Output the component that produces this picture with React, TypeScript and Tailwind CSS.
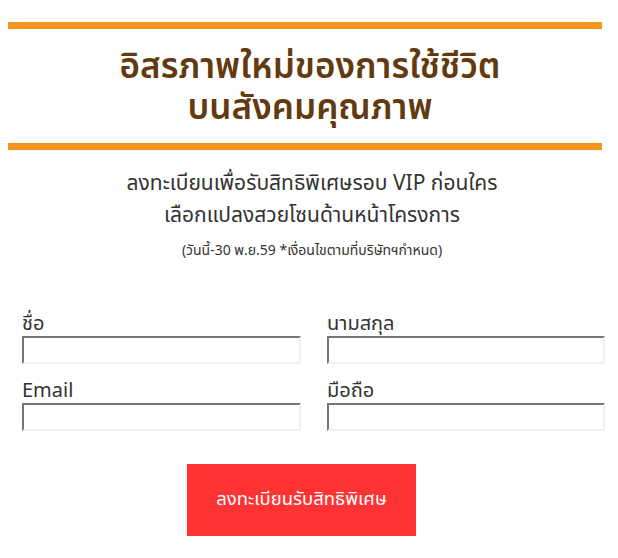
export default function App() {
    const font = { fontFamily: '"Noto Sans Thai", "Noto Sans", "Liberation Sans", sans-serif' };

    return (
        <div className="w-[618px] h-[558px] bg-white overflow-hidden" style={font}>
            <div className="pt-[22px] pl-[8px] w-[602px]">
                <div className="h-[7px] bg-[#f7941d]" />
                <div className="flex flex-col items-center pt-[18px] pb-[14px] text-[#633a10] font-semibold text-[35px] leading-[41px] pl-[10px]">
                    <div>อิสรภาพใหม่ของการใช้ชีวิต</div>
                    <div>บนสังคมคุณภาพ</div>
                </div>
                <div className="h-[7px] bg-[#f7941d]" />
            </div>

            <div className="flex flex-col items-center text-[#333] pl-[6px] pt-[18px]">
                <div className="text-[21px] leading-[32px]">ลงทะเบียนเพื่อรับสิทธิพิเศษรอบ VIP ก่อนใคร</div>
                <div className="text-[21px] leading-[32px]">เลือกแปลงสวยโซนด้านหน้าโครงการ</div>
                <div className="text-[14px] leading-[20px] mt-[9px]">(วันนี้-30 พ.ย.59 *เงื่อนไขตามที่บริษัทฯกำหนด)</div>
            </div>

            <div className="grid grid-cols-[279px_278px] gap-x-[26px] pl-[22px] pt-[51px] text-[#333]">
                <div className="flex flex-col">
                    <label className="text-[20px] leading-[24px]">ชื่อ</label>
                    <input className="h-[28px] border-2 border-t-[#767676] border-l-[#767676] border-r-[#f0f0f0] border-b-[#f0f0f0] outline-none" />
                </div>
                <div className="flex flex-col">
                    <label className="text-[20px] leading-[24px]">นามสกุล</label>
                    <input className="h-[28px] border-2 border-t-[#767676] border-l-[#767676] border-r-[#f0f0f0] border-b-[#f0f0f0] outline-none" />
                </div>
                <div className="flex flex-col mt-[15px]">
                    <label className="text-[20px] leading-[24px]">Email</label>
                    <input className="h-[28px] border-2 border-t-[#767676] border-l-[#767676] border-r-[#f0f0f0] border-b-[#f0f0f0] outline-none" />
                </div>
                <div className="flex flex-col mt-[15px]">
                    <label className="text-[20px] leading-[24px]">มือถือ</label>
                    <input className="h-[28px] border-2 border-t-[#767676] border-l-[#767676] border-r-[#f0f0f0] border-b-[#f0f0f0] outline-none" />
                </div>
            </div>

            <div className="pl-[187px] pt-[33px]">
                <button type="button" className="w-[229px] h-[72px] bg-[#ff3333] text-white text-[18.5px] flex items-center justify-center">
                    ลงทะเบียนรับสิทธิพิเศษ
                </button>
            </div>
        </div>
    );
}
